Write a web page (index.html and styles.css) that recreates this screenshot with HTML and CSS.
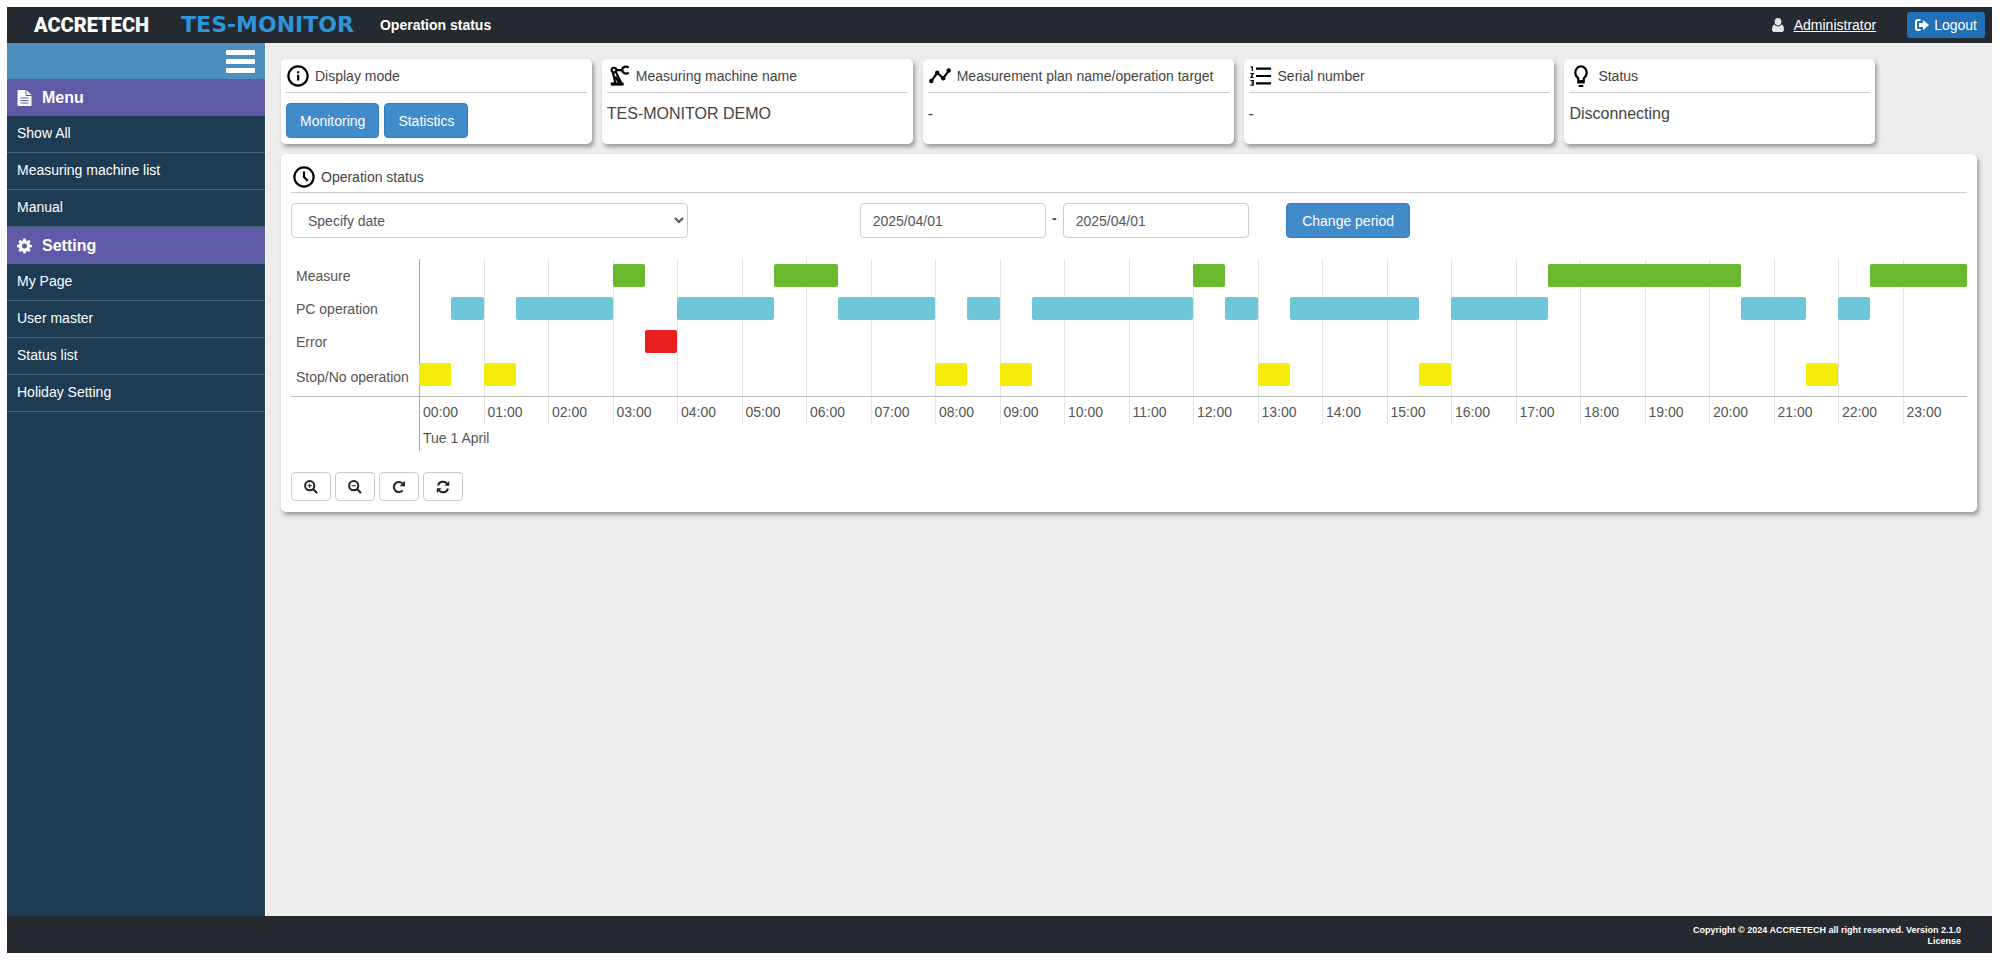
FILE: index.html
```html
<!DOCTYPE html>
<html lang="en">
<head>
    <meta charset="utf-8">
    <title>TES-MONITOR | Operation status</title>
    <link rel="stylesheet" href="styles.css">
</head>
<body>
    <header class="topbar">
        <span class="brand">ACCRETECH</span>
        <span class="product">TES-MONITOR</span>
        <h1 class="page-title">Operation status</h1>
        <div class="user">
            <svg class="user-icon" viewBox="0 0 12 14"><path d="M6 0a3.400 3.600 0 0 1 3.400 3.600A3.400 3.800 0 0 1 6 7.400a3.400 3.800 0 0 1-3.400-3.800A3.400 3.600 0 0 1 6 0zM2.600 6.500C3.500 7.800 4.700 8.300 6 8.300S8.500 7.800 9.400 6.500C11.300 6.900 12 9 12 11.500 12 13 11.200 14 10 14H2C.8 14 0 13 0 11.500 0 9 .7 6.900 2.600 6.500z"/></svg>
            <a class="user-name" href="#">Administrator</a>
            <button class="logout" type="button">
                <svg class="logout-icon" viewBox="0 0 14 12"><path class="door" d="M5.500 1H3a2 2 0 0 0-2 2v6a2 2 0 0 0 2 2h2.500"/><path d="M8 1l6 5-6 5V8H4V4h4z"/></svg>
                Logout
            </button>
        </div>
    </header>

    <div class="layout">
        <nav class="sidebar">
            <div class="toggle-bar">
                <button class="toggle" type="button" aria-label="Toggle menu">
                    <span></span><span></span><span></span>
                </button>
            </div>
            <h2 class="nav-head">
                <svg class="nav-icon" viewBox="0 0 14 16"><path d="M0 1a1 1 0 0 1 1-1h7v5a1 1 0 0 0 1 1h5v9a1 1 0 0 1-1 1H1a1 1 0 0 1-1-1z"/><path d="M9 0l5 5H9z"/><path class="lines" d="M3 8h8M3 10.500h8M3 13h8"/></svg>
                Menu
            </h2>
            <ul class="nav-list">
                <li><a href="#">Show All</a></li>
                <li><a href="#">Measuring machine list</a></li>
                <li><a href="#">Manual</a></li>
            </ul>
            <h2 class="nav-head">
                <svg class="nav-icon" viewBox="0 0 16 16"><path fill-rule="evenodd" d="M6.800 0h2.400l.4 2.200 1.300.5 1.800-1.200 1.800 1.800-1.200 1.800.5 1.300 2.200.4v2.400l-2.200.4-.5 1.300 1.200 1.800-1.800 1.800-1.800-1.200-1.300.5-.4 2.200H6.800l-.4-2.200-1.300-.5-1.800 1.200-1.800-1.800 1.200-1.800-.5-1.300L0 9.200V6.800l2.200-.4.5-1.300-1.200-1.800 1.800-1.800 1.800 1.200 1.300-.5zM8 5.300a2.700 2.700 0 1 0 0 5.400 2.700 2.700 0 0 0 0-5.400z"/></svg>
                Setting
            </h2>
            <ul class="nav-list">
                <li><a href="#">My Page</a></li>
                <li><a href="#">User master</a></li>
                <li><a href="#">Status list</a></li>
                <li><a href="#">Holiday Setting</a></li>
            </ul>
        </nav>

        <main class="content">
            <section class="cards">
                <div class="card">
                    <h3 class="card-title">
                        <svg class="icon" viewBox="0 0 24 24"><circle class="line" cx="12" cy="12" r="10.500"/><path d="M11 10.500h2.400v6.500H11zM11 6.800h2.400v2.300H11z"/></svg>
                        Display mode
                    </h3>
                    <div class="card-buttons">
                        <button class="btn" type="button">Monitoring</button>
                        <button class="btn" type="button">Statistics</button>
                    </div>
                </div>
                <div class="card">
                    <h3 class="card-title">
                        <svg class="icon" viewBox="0 0 24 24"><circle class="line" cx="6.500" cy="5.500" r="2.500"/><path class="line" d="M9 5.500h6M5.500 8.500l2.500 11.500M8.500 7.500l6 12M8 12.500l4 7"/><path class="line" d="M22.500 2.800C20 .8 15.500 2 15.500 5.500s4.500 5 7 2.800"/><path d="M3 19h14v3.500H3z"/></svg>
                        Measuring machine name
                    </h3>
                    <p class="card-value">TES-MONITOR DEMO</p>
                </div>
                <div class="card">
                    <h3 class="card-title">
                        <svg class="icon" viewBox="0 0 24 24"><path class="line" d="M2.500 17.500l6.500-9 6.500 6 6.500-9"/><circle cx="2.500" cy="17.500" r="2.400"/><circle cx="9" cy="8.500" r="2.400"/><circle cx="15.500" cy="14.500" r="2.400"/><circle cx="21.500" cy="6" r="2.400"/></svg>
                        Measurement plan name/operation target
                    </h3>
                    <p class="card-value">-</p>
                </div>
                <div class="card">
                    <h3 class="card-title">
                        <svg class="icon" viewBox="0 0 24 24"><path class="line" d="M6.500 4H23M6.500 12H23M6.500 20H23"/><path class="thin" d="M.5 2H2.500v4.500M.5 9.500h3L1 13.500h3M.5 17h3v5H.5M1.500 19.500h2"/></svg>
                        Serial number
                    </h3>
                    <p class="card-value">-</p>
                </div>
                <div class="card">
                    <h3 class="card-title">
                        <svg class="icon" viewBox="0 0 24 24"><path class="line" d="M9 17.500v-3C7 13 5.800 11 5.800 8.300a6.200 6.800 0 0 1 12.400 0c0 2.700-1.200 4.700-3.200 6.200v3z"/><path d="M8 18.500h8v1.800H8zM9.500 21.800h5V24h-5z"/></svg>
                        Status
                    </h3>
                    <p class="card-value">Disconnecting</p>
                </div>
            </section>

            <section class="panel">
                <h3 class="panel-title">
                    <svg class="icon" viewBox="0 0 24 24"><circle class="line" cx="12" cy="12" r="10.500"/><path class="line" d="M12 6v6l4 4"/></svg>
                    Operation status
                </h3>

                <form class="filters">
                    <select class="field period" aria-label="Period">
                        <option>Specify date</option>
                    </select>
                    <div class="dates">
                        <input class="field" type="text" value="2025/04/01" aria-label="Start date">
                        <span class="dash">-</span>
                        <input class="field" type="text" value="2025/04/01" aria-label="End date">
                    </div>
                    <button class="btn change" type="button">Change period</button>
                </form>

                <div class="timeline">
                    <div class="labels">
                        <div class="label">Measure</div>
                        <div class="label">PC operation</div>
                        <div class="label">Error</div>
                        <div class="label">Stop/No operation</div>
                    </div>
                    <div class="hours">
                        <span>00:00</span><span>01:00</span><span>02:00</span><span>03:00</span>
                        <span>04:00</span><span>05:00</span><span>06:00</span><span>07:00</span>
                        <span>08:00</span><span>09:00</span><span>10:00</span><span>11:00</span>
                        <span>12:00</span><span>13:00</span><span>14:00</span><span>15:00</span>
                        <span>16:00</span><span>17:00</span><span>18:00</span><span>19:00</span>
                        <span>20:00</span><span>21:00</span><span>22:00</span><span>23:00</span>
                    </div>
                    <!-- one grid column = 30 minutes -->
                    <div class="rows">
                        <div class="row measure">
                            <i style="grid-column: 7 / 8"></i>
                            <i style="grid-column: 12 / 14"></i>
                            <i style="grid-column: 25 / 26"></i>
                            <i style="grid-column: 36 / 42"></i>
                            <i style="grid-column: 46 / 49"></i>
                        </div>
                        <div class="row pc">
                            <i style="grid-column: 2 / 3"></i>
                            <i style="grid-column: 4 / 7"></i>
                            <i style="grid-column: 9 / 12"></i>
                            <i style="grid-column: 14 / 17"></i>
                            <i style="grid-column: 18 / 19"></i>
                            <i style="grid-column: 20 / 25"></i>
                            <i style="grid-column: 26 / 27"></i>
                            <i style="grid-column: 28 / 32"></i>
                            <i style="grid-column: 33 / 36"></i>
                            <i style="grid-column: 42 / 44"></i>
                            <i style="grid-column: 45 / 46"></i>
                        </div>
                        <div class="row error">
                            <i style="grid-column: 8 / 9"></i>
                        </div>
                        <div class="row stop">
                            <i style="grid-column: 1 / 2"></i>
                            <i style="grid-column: 3 / 4"></i>
                            <i style="grid-column: 17 / 18"></i>
                            <i style="grid-column: 19 / 20"></i>
                            <i style="grid-column: 27 / 28"></i>
                            <i style="grid-column: 32 / 33"></i>
                            <i style="grid-column: 44 / 45"></i>
                        </div>
                    </div>
                    <div class="day">Tue 1 April</div>
                </div>

                <div class="tools">
                    <button class="tool" type="button" aria-label="Zoom in">
                        <svg viewBox="0 0 14 14"><circle cx="5.700" cy="5.700" r="4.600"/><path d="M9.200 9.200l3.800 3.800"/><path class="sign" d="M3.500 5.700h4.400M5.700 3.500v4.400"/></svg>
                    </button>
                    <button class="tool" type="button" aria-label="Zoom out">
                        <svg viewBox="0 0 14 14"><circle cx="5.700" cy="5.700" r="4.600"/><path d="M9.200 9.200l3.800 3.800"/><path class="sign" d="M3.500 5.700h4.400"/></svg>
                    </button>
                    <button class="tool" type="button" aria-label="Redo">
                        <svg viewBox="0 0 14 14"><path d="M10.600 10.300A5 5 0 1 1 10.500 3.600"/><path class="solid" d="M13 .8v5.400H7.600z"/></svg>
                    </button>
                    <button class="tool" type="button" aria-label="Refresh">
                        <svg viewBox="0 0 14 14"><path d="M2 5.500A5.100 5.100 0 0 1 11 3.700M12 8.500A5.100 5.100 0 0 1 3 10.300"/><path class="solid" d="M13.200 1v4.800H8.400zM.8 13V8.200h4.800z"/></svg>
                    </button>
                </div>
            </section>
        </main>
    </div>

    <footer class="footer">
        <span>Copyright © 2024 ACCRETECH all right reserved. Version 2.1.0</span>
        <a href="#">License</a>
    </footer>
</body>
</html>
```
FILE: styles.css
```css
* {
    box-sizing: border-box;
}

body {
    margin: 0;
    padding: 7px 8px 7px 7px;
    min-height: 100vh;
    display: flex;
    flex-direction: column;
    background-color: #fdfdfd;
    font-family: "Liberation Sans", Arial, sans-serif;
    font-size: 14px;
    line-height: 20px;
    color: #444;
}

h1, h2, h3, p, ul {
    margin: 0;
    padding: 0;
    font-size: 14px;
    font-weight: normal;
}

button, input, select {
    font-family: inherit;
    font-size: 14px;
}

/* header */
.topbar {
    display: flex;
    align-items: center;
    height: 36px;
    padding: 0 7px 0 27px;
    background-color: #252930;
    color: #fff;
}

.brand {
    flex: 0 0 114px;
    font-family: Roboto, "Liberation Sans", sans-serif;
    font-size: 20px;
    font-weight: 900;
}

.product {
    margin-left: 32px;
    font-family: "DejaVu Sans", Verdana, sans-serif;
    font-size: 22px;
    font-weight: bold;
    color: #2d95d8;
}

.page-title {
    margin-left: 26px;
    font-weight: bold;
}

.user {
    display: flex;
    align-items: center;
    margin-left: auto;
}

.user-icon {
    width: 12px;
    height: 14px;
    margin-right: 10px;
    fill: #e4e4f0;
}

.user-name {
    margin-right: 31px;
    color: #fff;
    text-decoration: underline;
}

.logout {
    display: flex;
    align-items: center;
    gap: 5px;
    height: 26px;
    padding: 0 8px;
    border: 0;
    border-radius: 3px;
    background-color: #2170b8;
    color: #fff;
}

.logout-icon {
    width: 14px;
    height: 12px;
    fill: #fff;
}

.door {
    fill: none;
    stroke: #fff;
    stroke-width: 2;
}

/* sidebar */
.layout {
    flex: 1;
    display: flex;
}

.sidebar {
    flex: 0 0 259px;
    border-right: 1px solid #fff;
    background-color: #1d3c54;
    color: #fff;
}

.toggle-bar {
    display: flex;
    justify-content: flex-end;
    align-items: center;
    height: 36px;
    padding-right: 10px;
    background-color: #4a8fbd;
}

.toggle {
    display: flex;
    flex-direction: column;
    gap: 4px;
    padding: 0;
    border: 0;
    background: none;
}

.toggle span {
    width: 29px;
    height: 5px;
    border-radius: 1px;
    background-color: #fff;
}

.nav-head {
    display: flex;
    align-items: center;
    gap: 10px;
    height: 37px;
    padding-left: 10px;
    background-color: #5f5aa6;
    font-size: 16px;
    font-weight: bold;
}

.nav-icon {
    width: 15px;
    height: 16px;
    fill: #fff;
}

.nav-icon .lines {
    stroke: #5f5aa6;
}

.nav-list {
    list-style: none;
}

.nav-list a {
    display: block;
    height: 37px;
    padding: 7px 10px;
    border-bottom: 1px solid #47627a;
    color: #fff;
    text-decoration: none;
}

/* content */
.content {
    flex: 1;
    min-width: 0;
    padding: 16px 15px;
    background-color: #ececed;
}

.cards {
    display: grid;
    grid-template-columns: repeat(5, minmax(0, 1fr));
    gap: 10px;
    width: 94%;
    margin-bottom: 10px;
}

.card, .panel {
    border-radius: 5px;
    background-color: #fff;
    box-shadow: 2px 3px 4px rgba(0, 0, 0, 0.35);
}

.card {
    height: 85px;
    padding: 0 5px;
}

.card-title, .panel-title {
    display: flex;
    align-items: center;
    gap: 6px;
    border-bottom: 1px solid #ccc;
    white-space: nowrap;
}

.card-title {
    height: 34px;
    padding-left: 1px;
}

.icon {
    flex: none;
    width: 22px;
    height: 22px;
    fill: #000;
}

.line {
    fill: none;
    stroke: #000;
    stroke-width: 2.4;
}

.thin {
    fill: none;
    stroke: #000;
    stroke-width: 1.4;
}

.card-value {
    padding-top: 11px;
    font-size: 16px;
}

.card-buttons {
    display: flex;
    gap: 5px;
    padding-top: 10px;
}

.btn {
    height: 35px;
    padding: 0 13px;
    border: 1px solid #357ebd;
    border-radius: 4px;
    background-color: #428bca;
    color: #fff;
    white-space: nowrap;
}

/* operation status */
.panel {
    padding: 7px 10px 11px;
}

.panel-title {
    height: 32px;
    padding-left: 2px;
}

.filters {
    display: grid;
    grid-template-columns: repeat(12, minmax(0, 1fr));
    column-gap: 30px;
    margin: 10px 0 21px;
}

.field {
    height: 35px;
    border: 1px solid #ccc;
    border-radius: 4px;
    background-color: #fff;
    color: #555;
}

.period {
    grid-column: span 3;
    padding: 0 12px;
}

.dates {
    grid-column: 5 / span 3;
    display: flex;
    gap: 6px;
}

.dates .field {
    width: 47%;
    padding: 0 12px;
}

.dash {
    padding-top: 5px;
    font-weight: bold;
}

.change {
    justify-self: start;
    padding: 0 15px;
}

.timeline {
    display: grid;
    grid-template-columns: 128px minmax(0, 1fr);
    grid-template-rows: auto 27px 27px;
    color: #555;
}

.labels, .rows {
    border-bottom: 1px solid #bbb;
}

.label {
    display: flex;
    align-items: center;
    height: 33px;
    padding-left: 5px;
    white-space: nowrap;
}

.label:last-child, .row:last-child {
    height: 38px;
}

.hours {
    grid-area: 1 / 2 / 3 / 3;
    display: grid;
    grid-template-columns: repeat(24, minmax(0, 1fr));
}

.hours span {
    display: flex;
    align-items: flex-end;
    padding: 0 0 2px 3px;
    border-left: 1px solid #e5e5e5;
}

.hours span:first-child, .day {
    border-left: 1px solid #aaa;
}

.rows {
    grid-area: 1 / 2;
}

.row {
    display: grid;
    grid-template-columns: repeat(48, minmax(0, 1fr));
    height: 33px;
    padding-top: 5px;
}

.row i {
    height: 23px;
    border-radius: 2px;
}

.measure i {
    background-color: #6ab82d;
}

.pc i {
    background-color: #70c6d9;
}

.error i {
    background-color: #e62020;
}

.stop i {
    background-color: #f6ec0c;
}

.day {
    grid-area: 3 / 2;
    padding: 4px 0 0 3px;
}

.tools {
    display: flex;
    gap: 4px;
    margin-top: 21px;
}

.tool {
    display: flex;
    align-items: center;
    justify-content: center;
    width: 40px;
    height: 29px;
    padding: 0;
    border: 1px solid #ccc;
    border-radius: 4px;
    background-color: #fff;
}

.tool svg {
    width: 14px;
    height: 14px;
    fill: none;
    stroke: #222;
    stroke-width: 2;
}

.tool .sign {
    stroke-width: 1;
}

.tool .solid {
    fill: #222;
    stroke: none;
}

/* footer */
.footer {
    display: flex;
    flex-direction: column;
    align-items: flex-end;
    height: 37px;
    padding: 9px 31px 0 0;
    background-color: #252930;
    font-size: 9px;
    font-weight: bold;
    line-height: 11px;
    color: #fff;
}

.footer a {
    color: #fff;
    text-decoration: none;
}
```
